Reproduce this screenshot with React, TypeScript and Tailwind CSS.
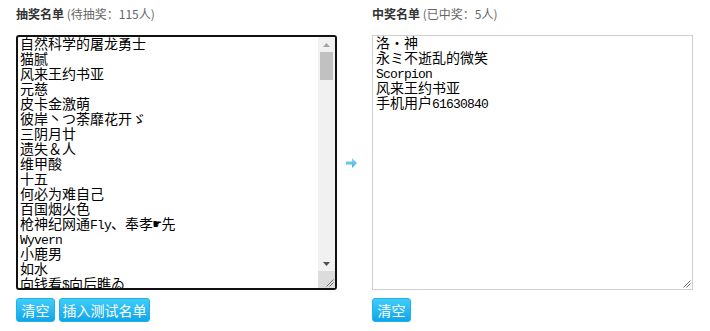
import React from 'react';

const pending = [
  '自然科学的屠龙勇士',
  '猫腻',
  '风来王约书亚',
  '元慈',
  '皮卡金激萌',
  '彼岸丶つ荼靡花开ゞ',
  '三阴月廿',
  '遗失＆人',
  '维甲酸',
  '十五',
  '何必为难自己',
  '百国烟火色',
  '枪神纪网通Fly、奉孝☛先',
  'Wyvern',
  '小鹿男',
  '如水',
  '向钱看$向后瞧ゐ',
  '一只猫',
];

const winners = ['洛・神', '永ミ不逝乱的微笑', 'Scorpion', '风来王约书亚', '手机用户61630840'];

const mono = "font-['Liberation_Mono','Noto_Sans_CJK_SC',monospace]";

// latin runs are half-width in the original font, so squeeze them a bit
function Line({ text }: { text: string }) {
  const parts = text.split(/([\x21-\x7e]+)/);
  return (
    <div className="h-[15px] whitespace-nowrap">
      {parts.map((p, i) =>
        /^[\x21-\x7e]+$/.test(p) ? (
          <span key={i} className="text-[13px] tracking-[-0.8px]">
            {p}
          </span>
        ) : (
          <span key={i}>{p}</span>
        )
      )}
    </div>
  );
}

function Tri({ up, color }: { up?: boolean; color: string }) {
  return (
    <svg width="7" height="4" viewBox="0 0 7 4">
      <path d={up ? 'M0 4 L3.5 0 L7 4 Z' : 'M0 0 L7 0 L3.5 4 Z'} fill={color} />
    </svg>
  );
}

function Grip() {
  return (
    <svg width="10" height="10" viewBox="0 0 10 10">
      <path d="M9.5 2.5 L2.5 9.5 M9.5 5.5 L5.5 9.5" stroke="#6f6f6f" strokeWidth="1" />
    </svg>
  );
}

function ScrollBar() {
  return (
    <div className="flex w-[17px] shrink-0 flex-col bg-[#f1f1f1]">
      <div className="flex h-[15px] items-center justify-center">
        <Tri up color="#a3a3a3" />
      </div>
      <div className="mx-[2px] h-[28px] bg-[#c1c1c1]" />
      <div className="flex-1" />
      <div className="flex h-[15px] items-center justify-center">
        <Tri color="#505050" />
      </div>
      <div className="flex h-[17px] items-end justify-end bg-[#dcdcdc] pb-[1px] pr-[1px]">
        <Grip />
      </div>
    </div>
  );
}

function Heading({ title, note }: { title: string; note: string }) {
  return (
    <div className="mb-[12px] h-[18px] text-[12px] leading-[18px] font-['Noto_Sans_CJK_SC',sans-serif]">
      <span className="font-bold text-[#333]">{title}</span>
      <span className="text-[#666]">{note}</span>
    </div>
  );
}

function Btn({ label, w }: { label: string; w: string }) {
  return (
    <button
      className={`h-[24px] ${w} rounded-[3px] border border-[#1eb1ec] bg-linear-to-b from-[#3fcdf9] to-[#0ca6ea] px-0 text-center text-[14px] leading-[22px] text-white font-['Noto_Sans_CJK_SC',sans-serif]`}
    >
      {label}
    </button>
  );
}

export default function App() {
  return (
    <div className="h-[331px] w-[710px] bg-white pl-4 pt-[5px]">
      <div className="flex">
        {/* pending list */}
        <div className="w-[321px]">
          <Heading title="抽奖名单" note=" (待抽奖：115人)" />
          <div className="flex h-[255px] overflow-hidden rounded-[3px] border-2 border-[#111]">
            <div className={`flex-1 overflow-hidden pl-[2px] pt-[1px] text-[14px] leading-[15px] text-black ${mono}`}>
              {pending.map((n, i) => (
                <Line key={i} text={n} />
              ))}
            </div>
            <ScrollBar />
          </div>
          <div className="mt-[8px] flex gap-[4px]">
            <Btn label="清空" w="w-[39px]" />
            <Btn label="插入测试名单" w="w-[91px]" />
          </div>
        </div>

        {/* arrow */}
        <div className="w-[35px] pt-[30px]">
          <div className="flex h-[255px] items-center justify-center pr-[6px]">
            <svg width="11" height="10" viewBox="0 0 11 10">
              <defs>
                <linearGradient id="ar" x1="0" y1="0" x2="0" y2="1">
                  <stop offset="0" stopColor="#8fdcf4" />
                  <stop offset="1" stopColor="#3eaedc" />
                </linearGradient>
              </defs>
              <path d="M0 3.5 H6 V0 L11 5 L6 10 V6.5 H0 Z" fill="url(#ar)" />
            </svg>
          </div>
        </div>

        {/* winners */}
        <div className="w-[321px]">
          <Heading title="中奖名单" note=" (已中奖：5人)" />
          <div className="flex h-[255px] flex-col border border-[#cfcfcf]">
            <div className={`flex-1 overflow-hidden pl-[3px] pt-[1px] text-[14px] leading-[15px] text-black ${mono}`}>
              {winners.map((n, i) => (
                <Line key={i} text={n} />
              ))}
            </div>
            <div className="flex justify-end pb-[1px] pr-[1px]">
              <Grip />
            </div>
          </div>
          <div className="mt-[8px] flex">
            <Btn label="清空" w="w-[39px]" />
          </div>
        </div>
      </div>
    </div>
  );
}
